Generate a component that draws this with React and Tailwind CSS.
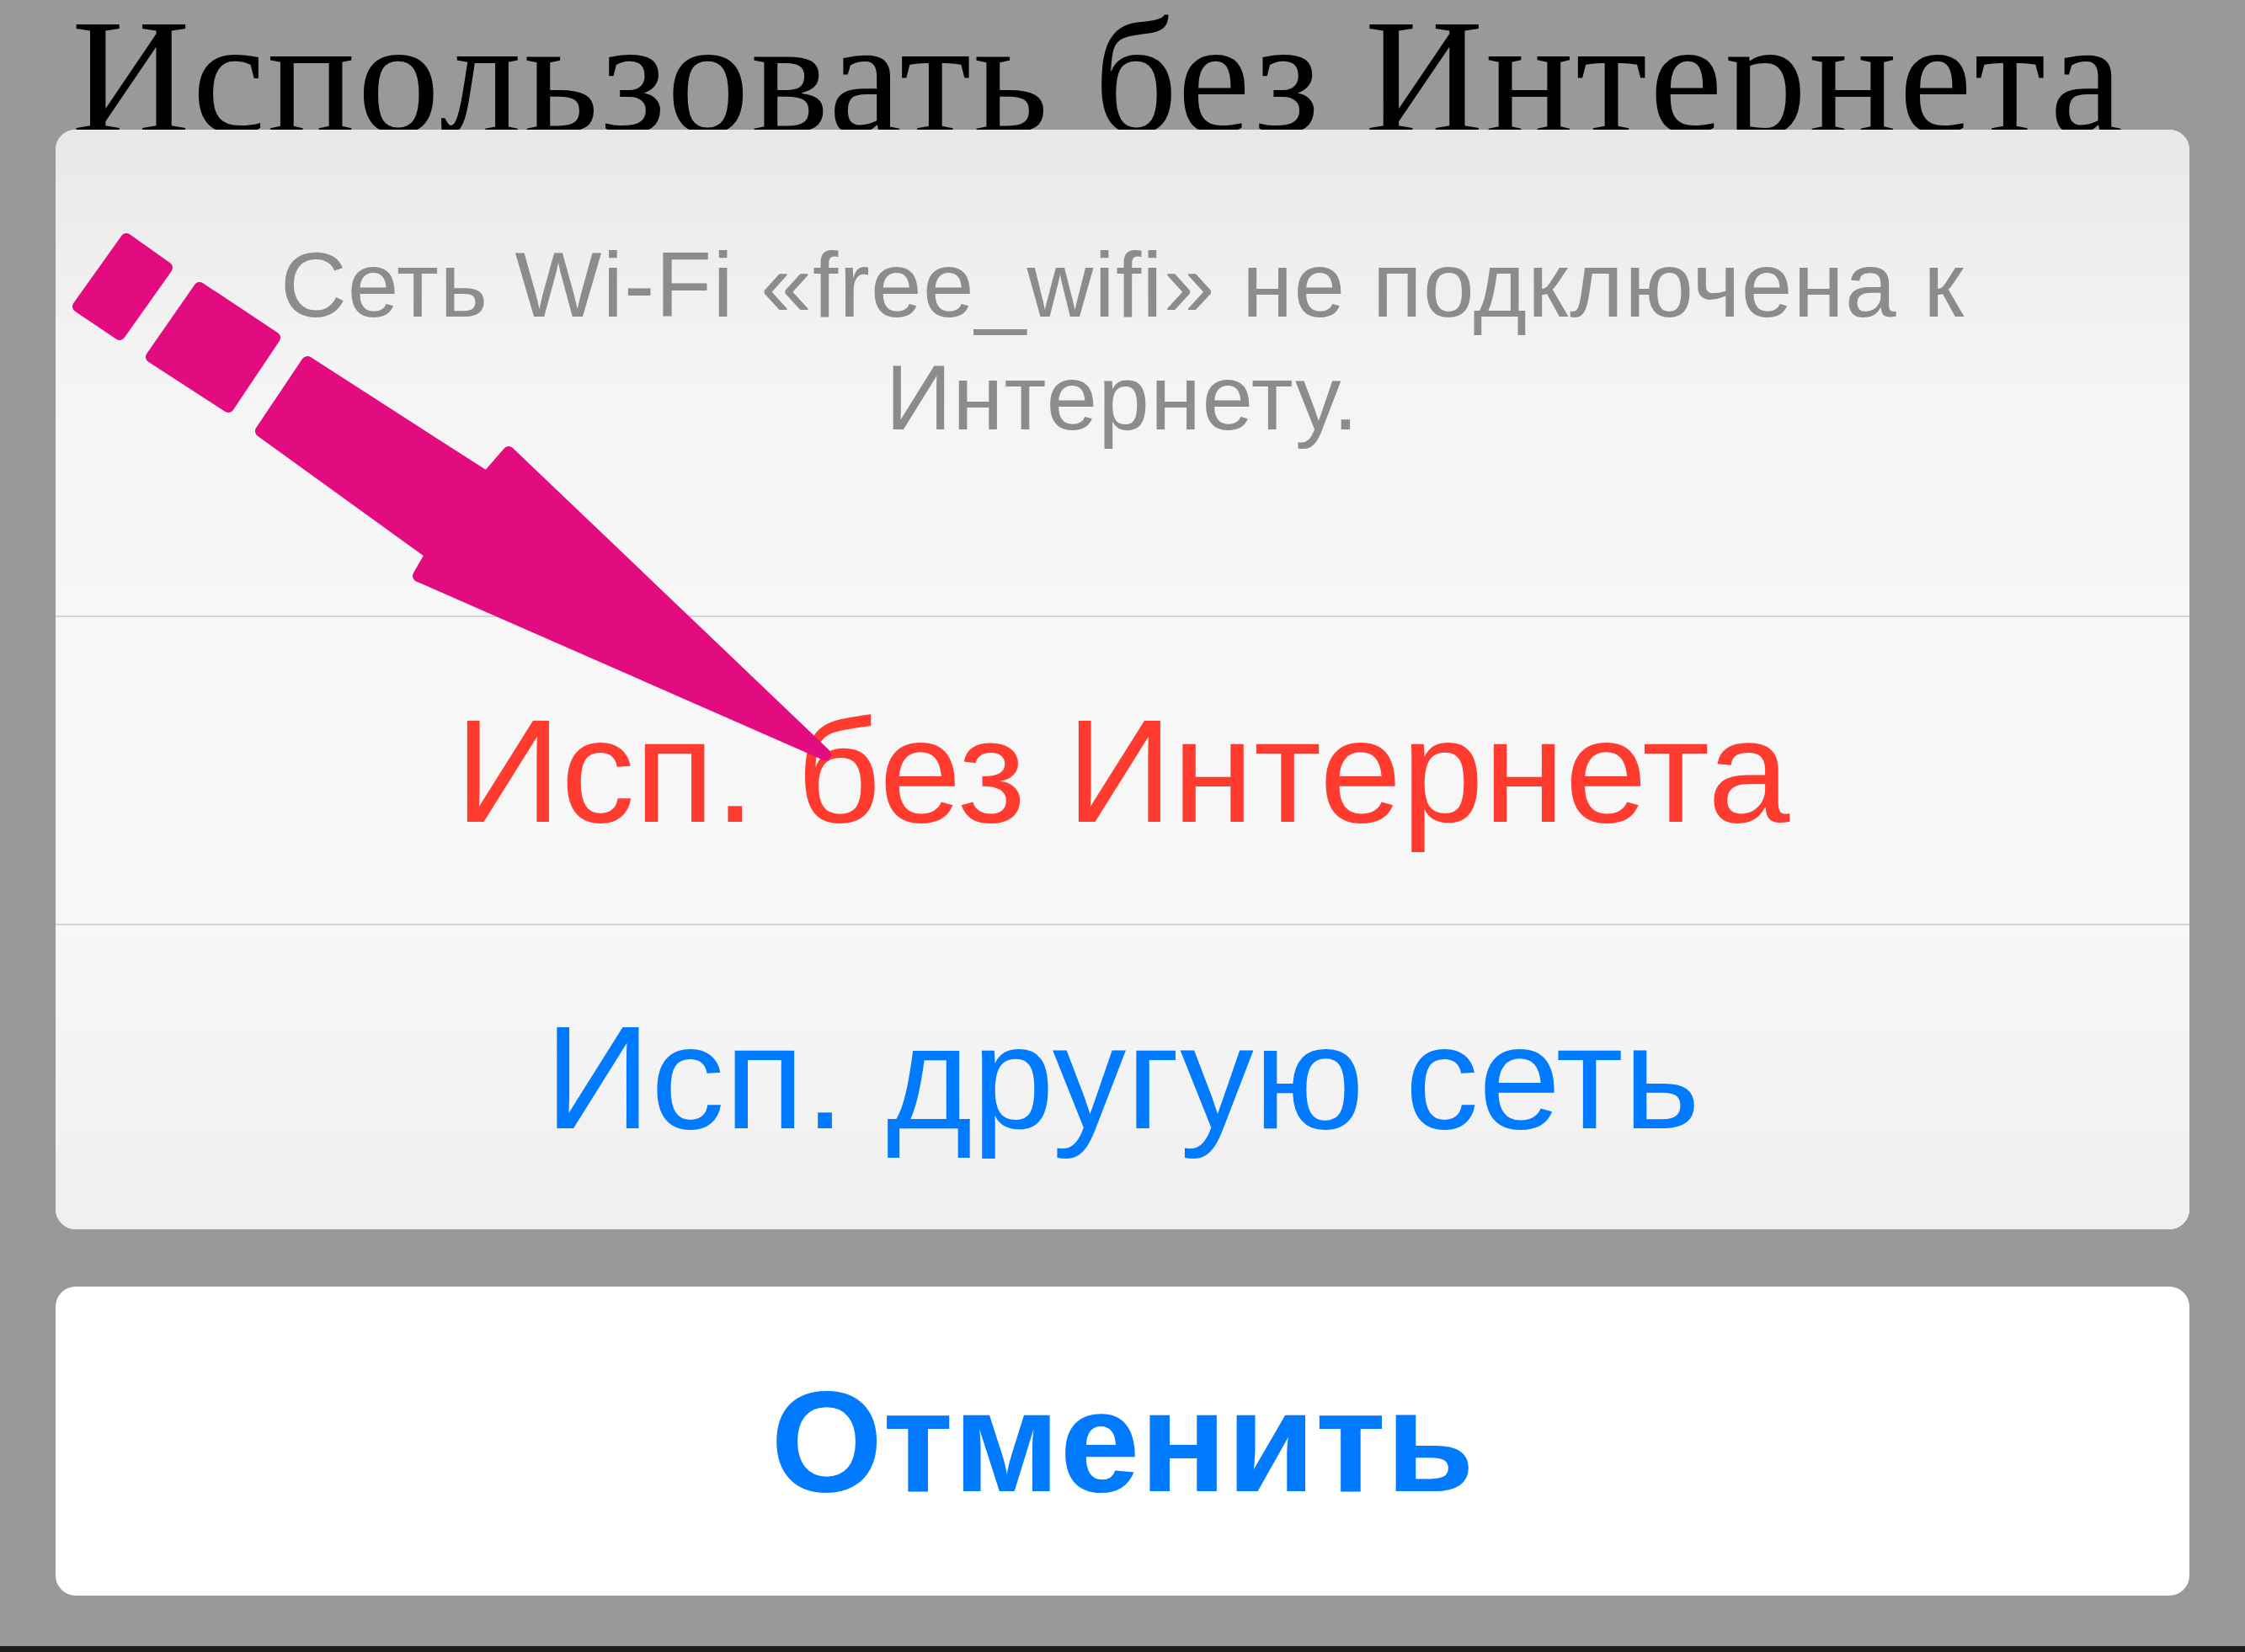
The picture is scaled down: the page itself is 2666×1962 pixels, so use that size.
import React from 'react';

const sans = "font-['Liberation_Sans',Arial,sans-serif]";

const Arrow = () => (
  <svg
    className="absolute inset-0 pointer-events-none"
    width="2666"
    height="1962"
    viewBox="0 0 2666 1962"
  >
    <g fill="#e30b80" stroke="#e30b80" strokeWidth="14" strokeLinejoin="round">
      <polygon points="150,284 198,318 142,397 93,364" />
      <polygon points="237,342 326,401 271,483 180,424" />
      <polygon points="365,430 578,567 604,537 980,896 497,684 512,658 310,512" />
    </g>
  </svg>
);

const App = () => {
  return (
    <div className="relative w-[2666px] h-[1962px] overflow-hidden bg-[#999999] flex flex-col">
      <div className="h-[154px] overflow-hidden pl-[85px] shrink-0">
        <p className="font-['Liberation_Serif','Times_New_Roman',serif] text-[195px] leading-[182px] tracking-[2.6px] text-black whitespace-nowrap">
          Использовать без Интернета
        </p>
      </div>

      <div className={`mx-[66px] h-[1306px] shrink-0 rounded-[24px] overflow-hidden bg-[#f7f7f7] flex flex-col ${sans}`}>
        <div className="h-[577px] shrink-0 bg-gradient-to-b from-[#e8e8e8] via-[#f4f4f4] to-[#f7f7f7] px-[180px] pt-[117px] text-center">
          <p className="text-[109px] leading-[134px] tracking-[1.2px] text-[#8c8c8c]">
            Сеть Wi-Fi «free_wifi» не подключена к Интернету.
          </p>
        </div>
        <div className="h-[2px] shrink-0 bg-[#d3d3d7]" />
        <div className="h-[364px] shrink-0 flex items-center justify-center">
          <span className="text-[175px] leading-none text-[#ff3b30]">Исп. без Интернета</span>
        </div>
        <div className="h-[2px] shrink-0 bg-[#d3d3d7]" />
        <div className="flex-1 flex items-center justify-center bg-gradient-to-b from-[#f7f7f7] to-[#efefef]">
          <span className="text-[175px] leading-none text-[#007aff]">Исп. другую сеть</span>
        </div>
      </div>

      <div className={`mx-[66px] mt-[68px] h-[367px] shrink-0 rounded-[24px] bg-white flex items-center justify-center ${sans}`}>
        <span className="text-[171px] leading-none font-bold text-[#007aff]">Отменить</span>
      </div>

      <div className="flex-1" />
      <div className="h-[7px] shrink-0 bg-[#1c1c1c]" />

      <Arrow />
    </div>
  );
};

export default App;
